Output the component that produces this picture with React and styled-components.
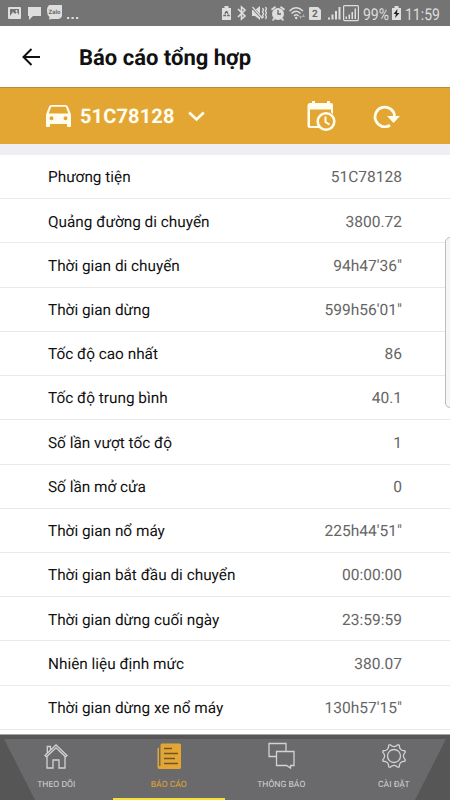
import React from 'react';
import styled, { createGlobalStyle } from 'styled-components';

const GlobalStyle = createGlobalStyle`
  * {
    box-sizing: border-box;
  }

  body {
    margin: 0;
    background: #fff;
    font-family: Roboto, "Noto Sans", sans-serif;
    text-rendering: geometricPrecision;
  }
`;

const Screen = styled.div`
  position: relative;
  display: flex;
  flex-direction: column;
  width: 450px;
  height: 800px;
  overflow: hidden;
  background: #fff;
`;

const StatusBar = styled.div`
  display: flex;
  flex: none;
  align-items: flex-start;
  height: 26px;
  background: #747474;
  color: #dedede;
`;

const StatusIcon = styled.svg`
  flex: none;
  width: ${props => props.$w}px;
  height: 26px;
  margin-left: ${props => props.$gap || 0}px;
  fill: #dedede;
`;

const StatusText = styled.span`
  flex: none;
  width: ${props => props.$w}px;
  margin-left: ${props => props.$gap}px;
  font-size: 16.3px;
  line-height: 29px;
  white-space: nowrap;
  transform: scaleX(0.86);
  transform-origin: left center;
`;

const Header = styled.header`
  display: flex;
  flex: none;
  align-items: center;
  height: 61px;
  padding-left: 22px;
`;

const BackIcon = styled.svg`
  width: 18px;
  height: 18px;
  margin-right: 39px;
  fill: none;
  stroke: #111;
  stroke-width: 2;
`;

const Title = styled.h1`
  margin: 0;
  padding-top: 4px;
  color: #111;
  font-size: 22px;
  font-weight: 700;
  line-height: 28px;
`;

const Toolbar = styled.div`
  display: flex;
  flex: none;
  align-items: center;
  height: 57px;
  padding-left: 46px;
  border-top: 1px solid #b98d35;
  background: #e3a633;
  color: #fffdf0;
`;

const ToolIcon = styled.svg`
  flex: none;
  width: ${props => props.$w}px;
  height: ${props => props.$h}px;
  margin-left: ${props => props.$gap || 0}px;
  fill: #fffdf0;
`;

const Plate = styled.span`
  width: 95px;
  margin-left: 9px;
  font-size: 20px;
  font-weight: 700;
  line-height: 24px;
  letter-spacing: 0.15px;
`;

const List = styled.main`
  flex: none;
  height: 590px;
  border-top: 11px solid #efeef3;
`;

const Row = styled.div`
  display: flex;
  align-items: center;
  justify-content: space-between;
  height: 44.22px;
  padding: 1.5px 48px 0;
  border-bottom: 1px solid #e9e9e9;
`;

const Label = styled.span`
  color: #111;
  font-size: 15.35px;
`;

const Value = styled.span`
  color: #666;
  font-size: 15.55px;
`;

const EdgePanel = styled.div`
  position: absolute;
  top: 237px;
  right: -6px;
  width: 11px;
  height: 171px;
  border: 1px solid #bdbdbd;
  border-radius: 5px;
  background: #f6f6f6;
`;

const TabBar = styled.nav`
  position: relative;
  display: grid;
  flex: none;
  grid-template-columns: repeat(4, 1fr);
  height: 66px;
  border-top: 1px solid #a5a5a5;
  background: #565656;

  &::before {
    content: "";
    position: absolute;
    inset: 4px 0 0;
    background: #6a6a6c;
    clip-path: polygon(4px 0, 446px 0, 415px 100%, 35px 100%);
  }
`;

const Tab = styled.div`
  position: relative;
  display: flex;
  flex-direction: column;
  align-items: center;
  padding-top: 6px;
  border-bottom: 2px solid ${props => (props.$active ? '#f7e032' : 'transparent')};
  color: ${props => (props.$active ? '#e3a633' : '#d2d2d2')};
  font-size: 8.6px;
`;

const TabIcon = styled.svg`
  width: 28px;
  height: 30px;
  fill: none;
  stroke: currentColor;
  stroke-width: 1.3;
`;

const TabLabel = styled.span`
  margin-top: 8px;
  line-height: 12px;
`;

const ROWS = [
  ['Phương tiện', '51C78128'],
  ['Quảng đường di chuyển', '3800.72'],
  ['Thời gian di chuyển', '94h47\'36"'],
  ['Thời gian dừng', '599h56\'01"'],
  ['Tốc độ cao nhất', '86'],
  ['Tốc độ trung bình', '40.1'],
  ['Số lần vượt tốc độ', '1'],
  ['Số lần mở cửa', '0'],
  ['Thời gian nổ máy', '225h44\'51"'],
  ['Thời gian bắt đầu di chuyển', '00:00:00'],
  ['Thời gian dừng cuối ngày', '23:59:59'],
  ['Nhiên liệu định mức', '380.07'],
  ['Thời gian dừng xe nổ máy', '130h57\'15"'],
];

const ZaloText = styled.text`
  fill: #6a6a6a;
  font-size: 6px;
  font-weight: 700;
`;

const SimText = styled.text`
  fill: #666;
  font-size: 10px;
  font-weight: 700;
`;

/**
 * Builds the outline of the eight-toothed gear, centred on 14,15
 */
function gearPath() {
  const point = (radius, degrees) => {
    const angle = degrees * Math.PI / 180;
    return `${(14 + radius * Math.cos(angle)).toFixed(2)} ${(15 + radius * Math.sin(angle)).toFixed(2)}`;
  };
  let path = `M${point(12, -19)}`;
  for (let i = 0; i < 8; i++) {
    const valley = i * 45;
    path += `Q${point(7.4, valley)} ${point(12, valley + 19)}L${point(12, valley + 26)}`;
  }
  return path + 'Z';
}

function PhoneStatus() {
  return (
    <StatusBar>
      <StatusIcon $w={13} $gap={8} viewBox="0 0 13 26">
        <path fillRule="evenodd" d="M1 7h11q1 0 1 1v10q0 1-1 1H1q-1 0-1-1V8q0-1 1-1zM2 9v7l3-4 2 2 2-2 2 3V9z" />
        <circle cx="8.5" cy="11" r="1" />
      </StatusIcon>
      <StatusIcon $w={13} $gap={7} viewBox="0 0 13 26">
        <path d="M0 7h13v9H5l-4 4v-4H0z" />
      </StatusIcon>
      <StatusIcon $w={15} $gap={6} viewBox="0 0 15 26">
        <path d="M2 5h13v11q-1 3-4 3H5l-3 .5L2.500 17Q0 15 0 11q0-4 2-6z" />
        <ZaloText x="1.500" y="13.500" textLength="12">Zalo</ZaloText>
      </StatusIcon>
      <StatusIcon $w={13} $gap={5} viewBox="0 0 13 26">
        <path d="M0 17h2.200v2H0zM4.500 17h2.200v2H4.500zM9 17h2.200v2H9z" />
      </StatusIcon>
      <StatusIcon $w={9} $gap={142} viewBox="0 0 9 26">
        <path d="M0 8h2.500V6h4v2H9v12H0z" />
        <path d="M4.500 11L7 15.500H2z" fill="none" stroke="#686868" strokeWidth="1.300" strokeDasharray="3 1" />
      </StatusIcon>
      <StatusIcon $w={10} $gap={6} viewBox="0 0 10 26">
        <path d="M1 9l7 7-3.500 3V7L8 10l-7 7" fill="none" stroke="#dedede" strokeWidth="1.600" />
      </StatusIcon>
      <StatusIcon $w={15} $gap={5} viewBox="0 0 15 26">
        <path d="M0 10h3l5-4v14l-5-4H0z" />
        <path d="M0 7l10 11" fill="none" stroke="#747474" strokeWidth="2.600" />
        <path d="M.5 7l10 11.500M10.500 8l1 1.800-1 2 1 2-1 2 1 2M13.500 7l1 2-1 2 1 2-1 2 1 2-1 2" fill="none" stroke="#dedede" strokeWidth="1.400" />
      </StatusIcon>
      <StatusIcon $w={14} $gap={4} viewBox="0 0 14 26">
        <circle cx="7" cy="14" r="6" />
        <path d="M0 9l4-3 1 1.500-4 3zM14 9l-4-3-1 1.500 4 3zM2 18l2 1-1 1.500H1zM12 18l-2 1 1 1.500h2z" />
        <path d="M7 10v4h3" fill="none" stroke="#666" strokeWidth="1.300" />
      </StatusIcon>
      <StatusIcon $w={17} $gap={4} viewBox="0 0 17 26">
        <path d="M.5 11Q7 4.500 14 11M2.500 13.500q5-4.500 9 0M5 16q2.500-2.500 4.500 0" fill="none" stroke="#dedede" strokeWidth="1.500" />
        <circle cx="7.200" cy="18" r="1.200" />
        <path d="M10 16h3l-1.500 3zM13 17h3l-1.500-3z" opacity=".55" />
      </StatusIcon>
      <StatusIcon $w={12} $gap={3} viewBox="0 0 12 26">
        <path d="M1 7h8l3 3v9q0 1-1 1H1q-1 0-1-1V8q0-1 1-1z" />
        <SimText x="3.100" y="17">2</SimText>
      </StatusIcon>
      <StatusIcon $w={13} $gap={7} viewBox="0 0 13 26">
        <path d="M0 17.500h2v2H0zM3.500 14.500h2v5h-2zM7 11h2v8.500H7zM10.500 7h2v12.500h-2z" />
      </StatusIcon>
      <StatusIcon $w={16} $gap={2} viewBox="0 0 16 26">
        <rect x=".6" y="5.600" width="14.800" height="15" rx="1" fill="none" stroke="#dedede" strokeWidth="1.200" />
        <path d="M2.500 16.500H4V19H2.500zM5.500 14.500H7V19H5.500zM8.500 12H10v7H8.500zM11.500 8.500H13V19h-1.500z" />
      </StatusIcon>
      <StatusText $w={26} $gap={4}>99%</StatusText>
      <StatusIcon $w={9} $gap={3} viewBox="0 0 9 26">
        <path d="M0 8h2.500V6h4v2H9v12H0z" />
        <path d="M5.500 9L1.500 14h2.500L3 18l4.500-5H5z" fill="#222" />
      </StatusIcon>
      <StatusText $w={36} $gap={4}>11:59</StatusText>
    </StatusBar>
  );
}

const App = () => {
  return (
    <Screen>
      <GlobalStyle />
      <PhoneStatus />
      <Header>
        <BackIcon viewBox="0 0 18 18">
          <path d="M18 9H1.500M9.500 1L1.500 9l8 8" />
        </BackIcon>
        <Title>Báo cáo tổng hợp</Title>
      </Header>
      <Toolbar>
        <ToolIcon $w={25} $h={22} viewBox="0 0 25 22">
          <path fillRule="evenodd" d="M5.500 0h14q1.800 0 2.400 1.500L25 9.500V21q0 1-1 1h-2q-1 0-1-1v-2H4v2q0 1-1 1H1q-1 0-1-1V9.500l3.100-8Q3.700 0 5.500 0zM5.200 1.800L2.700 8.500h19.600l-2.500-6.700zM5.500 11.300a2 2 0 1 0 0 4 2 2 0 0 0 0-4zM19.500 11.300a2 2 0 1 0 0 4 2 2 0 0 0 0-4z" />
        </ToolIcon>
        <Plate>51C78128</Plate>
        <ToolIcon $w={17} $h={11} $gap={13} viewBox="0 0 17 11">
          <path d="M1.200 1.500l7.300 7 7.300-7" fill="none" stroke="#fffdf0" strokeWidth="2.700" />
        </ToolIcon>
        <ToolIcon $w={29} $h={32} $gap={102} viewBox="0 0 29 32">
          <path fillRule="evenodd" d="M5 1h3v2h12V1h3v2h1q2 0 2 2v9l-2-1.500V9.500H3V26h8l1.500 2H3q-2.500 0-2.500-2.500V5.500Q.5 3 3 3h2z" />
          <circle cx="19" cy="21.500" r="8.300" fill="#e3a633" stroke="#fffdf0" strokeWidth="2.600" />
          <path d="M18.500 16.500V22l4 2.600" fill="none" stroke="#fffdf0" strokeWidth="2" />
        </ToolIcon>
        <ToolIcon $w={28} $h={24} $gap={37} viewBox="0 0 28 24">
          <path d="M17 21.300A9.800 9.800 0 1 1 21.600 12" fill="none" stroke="#fffdf0" strokeWidth="2.800" />
          <path d="M14 12h13l-6.500 7z" />
        </ToolIcon>
      </Toolbar>
      <List>
        {ROWS.map(function([label, value]) {
          return (
            <Row key={label}>
              <Label>{label}</Label>
              <Value>{value}</Value>
            </Row>
          )
        })}
      </List>
      <TabBar>
        <Tab>
          <TabIcon viewBox="0 0 28 30">
            <path d="M3 14.500L14 4l11 10.500-1.500 1.300L14 6.800l-9.500 9zM5 15.500V27h6v-8h6v8h6V15.500M5.300 12V5.500H8.500v3.500" />
          </TabIcon>
          <TabLabel>THEO DÕI</TabLabel>
        </Tab>
        <Tab $active>
          <TabIcon viewBox="0 0 28 30">
            <path d="M7 2.500h17.500q1.500 0 1.500 1.500v22.500q0 1.500-1.500 1.500H4.500Q2.500 28 2.500 26V8q0-1 1-1.500h.5V25h1.500V4q0-1.500 1.500-1.500z" fill="currentColor" stroke="none" />
            <path d="M9 7.500h8M9 12.500h14M9 17.500h11M9 22.500h14" stroke="#70552c" />
          </TabIcon>
          <TabLabel>BÁO CÁO</TabLabel>
        </Tab>
        <Tab>
          <TabIcon viewBox="0 0 28 30">
            <path d="M9.500 15.500H2v-13h17v8M9.500 10.500H27v14h-3.500V27l-4-2.500h-10z" />
          </TabIcon>
          <TabLabel>THÔNG BÁO</TabLabel>
        </Tab>
        <Tab>
          <TabIcon viewBox="0 0 28 30">
            <circle cx="14" cy="15" r="6.500" />
            <path d={gearPath()} />
          </TabIcon>
          <TabLabel>CÀI ĐẶT</TabLabel>
        </Tab>
      </TabBar>
      <EdgePanel />
    </Screen>
  );
};

export default App;
